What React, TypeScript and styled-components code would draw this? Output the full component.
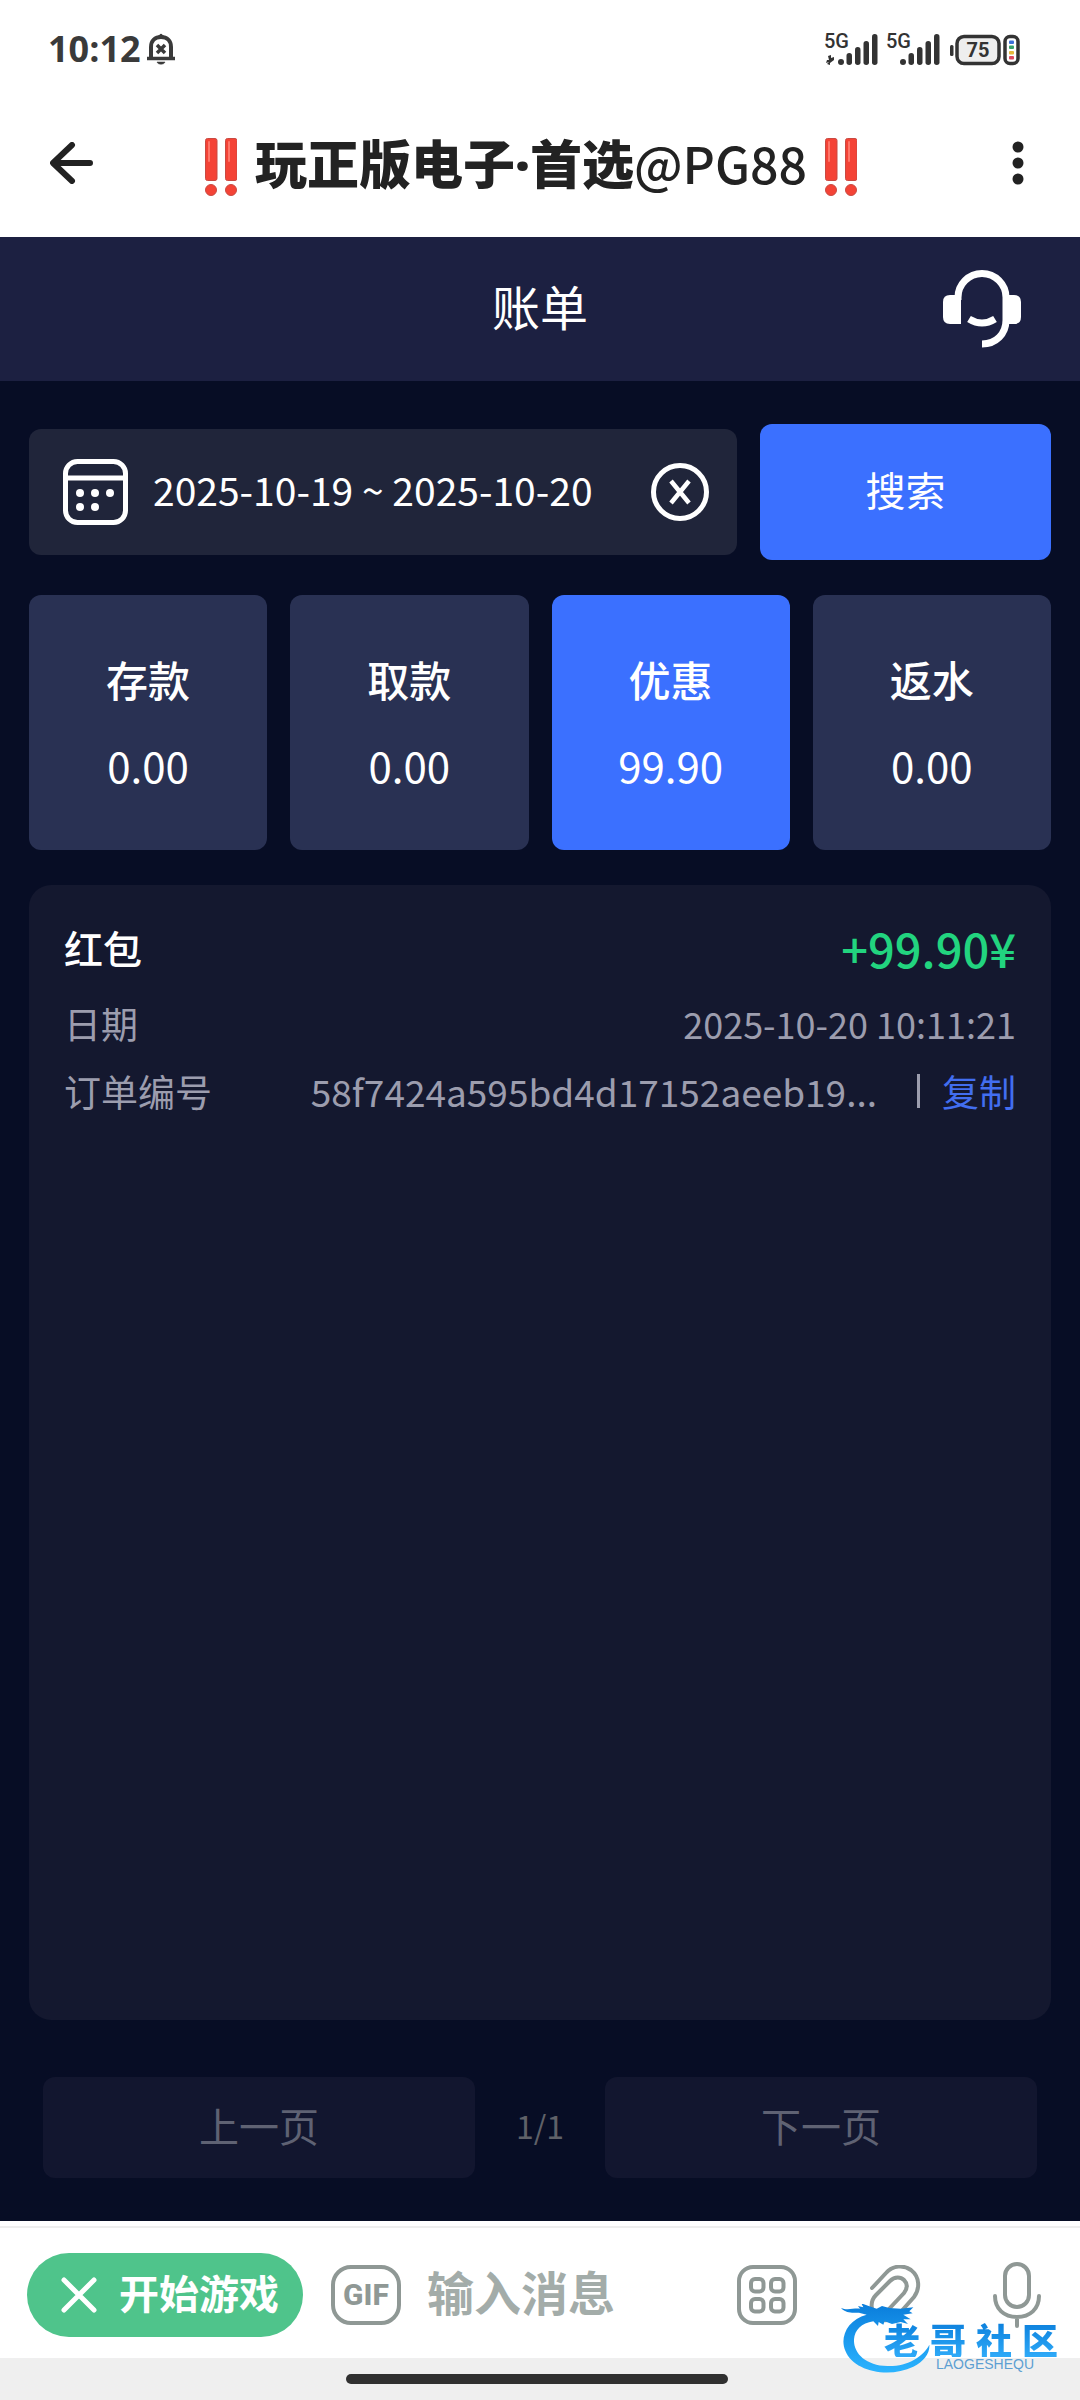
import React, { useState } from "react";
import styled, { createGlobalStyle } from "styled-components";

const GlobalStyle = createGlobalStyle`
  *, *::before, *::after { box-sizing: border-box; }
  body { margin: 0; background: #ffffff; }
  body, button, input {
    font-family: "Noto Sans CJK SC", "Noto Sans", sans-serif;
  }
  button { border: 0; padding: 0; background: none; color: inherit; cursor: pointer; }
  svg { display: block; flex: none; }
`;

const Page = styled.div`
  position: relative;
  display: flex;
  flex-direction: column;
  min-height: 100vh;
  background: #ffffff;
`;

const StatusBar = styled.div`
  display: flex;
  align-items: center;
  justify-content: space-between;
  height: 98px;
  padding: 0 59px 0 48px;
  color: #3a3a3a;
`;

const Clock = styled.div`
  display: flex;
  align-items: center;
  gap: 5px;
  font-family: "Open Sans", "Noto Sans", sans-serif;
  font-size: 36px;
  line-height: 44px;
  font-weight: 700;
`;

const TitleBar = styled.header`
  display: flex;
  align-items: center;
  height: 139px;
  padding: 0 56px 10px 50px;
  color: #222222;
`;

const MenuButton = styled.button`
  display: flex;
  justify-content: flex-end;
  width: 56px;
`;

const ChatTitle = styled.h1`
  flex: 1;
  display: flex;
  align-items: center;
  justify-content: center;
  gap: 18px;
  margin: 0;
  font-size: 52px;
  line-height: 64px;
  font-weight: 900;
  white-space: nowrap;
`;

const Emoji = styled.span`
  padding-top: 8px;
`;

const Dot = styled.span`
  font-family: "Noto Sans", sans-serif;
`;

const Handle = styled.span`
  font-size: 50px;
  font-weight: 500;
`;

const WebApp = styled.main`
  flex: 1;
  display: flex;
  flex-direction: column;
  background: #070d25;
  color: #ffffff;
`;

const AppHeader = styled.div`
  display: grid;
  grid-template-columns: 1fr auto 1fr;
  align-items: center;
  height: 144px;
  padding: 0 59px;
  background: #1c2041;
`;

const AppTitle = styled.h2`
  grid-column: 2;
  margin: 0;
  padding-bottom: 8px;
  font-size: 48px;
  line-height: 56px;
  font-weight: 400;
`;

const SupportButton = styled.button`
  justify-self: end;
`;

const Content = styled.div`
  flex: 1;
  display: flex;
  flex-direction: column;
  padding: 43px 29px;
`;

const SearchRow = styled.div`
  display: flex;
  align-items: center;
  gap: 23px;
`;

const DateField = styled.label`
  flex: 1;
  display: flex;
  align-items: center;
  height: 126px;
  padding: 0 28px 0 34px;
  border-radius: 12px;
  background: #20253a;
`;

const DateInput = styled.input`
  flex: 1;
  min-width: 0;
  margin: 0 0 0 24px;
  padding: 0 0 6px;
  border: 0;
  outline: 0;
  background: none;
  color: #ffffff;
  font-size: 39px;
  line-height: 56px;
`;

const SearchButton = styled.button`
  width: 291px;
  height: 136px;
  padding-bottom: 6px;
  border-radius: 12px;
  background: #3b70ff;
  color: #ffffff;
  font-size: 40px;
`;

const Tabs = styled.div`
  display: grid;
  grid-template-columns: repeat(4, 1fr);
  gap: 23px;
  margin-top: 35px;
`;

const Tab = styled.button<{ $active: boolean }>`
  display: flex;
  flex-direction: column;
  align-items: center;
  justify-content: center;
  gap: 30px;
  height: 255px;
  padding-bottom: 2px;
  border-radius: 12px;
  background: ${(p) => (p.$active ? "#3b70ff" : "#293153")};
  color: #ffffff;
  font-size: 42px;
  line-height: 56px;
`;

const TabLabel = styled.span`
  font-weight: 500;
`;

const Records = styled.section`
  flex: 1;
  margin-top: 35px;
  padding: 32px 35px;
  border-radius: 22px;
  background: #14182f;
`;

const Line = styled.div<{ $head?: boolean }>`
  display: flex;
  align-items: center;
  justify-content: space-between;
  height: ${(p) => (p.$head ? "72px" : "68px")};
  padding-bottom: ${(p) => (p.$head ? "12px" : "0")};
  color: ${(p) => (p.$head ? "#ffffff" : "#9c9dae")};
  font-size: ${(p) => (p.$head ? "39px" : "37px")};
  font-weight: ${(p) => (p.$head ? 500 : 400)};
`;

const Amount = styled.span`
  color: #22d47f;
  font-size: 47px;
`;

const DateValue = styled.span`
  font-size: 36px;
`;

const OrderValue = styled.span`
  display: flex;
  align-items: center;
  gap: 22px;
`;

const Divider = styled.span`
  width: 3px;
  height: 34px;
  margin-left: 18px;
  background: #9c9dae;
`;

const CopyButton = styled.button`
  color: #426ef0;
  font-size: 37px;
`;

const Pager = styled.nav`
  display: flex;
  align-items: center;
  margin-top: 57px;
  padding: 0 14px;
`;

const PageButton = styled.button`
  flex: 1;
  height: 101px;
  padding-bottom: 6px;
  border-radius: 12px;
  background: #12162f;
  color: #5f6273;
  font-size: 40px;
`;

const PageCount = styled.span`
  width: 130px;
  padding-bottom: 6px;
  color: #5f6168;
  font-size: 32px;
  text-align: center;
`;

const MessageBar = styled.footer`
  padding-top: 5px;
  background: #ffffff;
`;

const MessageRow = styled.div`
  display: flex;
  align-items: center;
  height: 132px;
  padding: 3px 39px 0 27px;
  border-top: 2px solid #eeeeee;
  color: #8f9895;
`;

const StartButton = styled.button`
  display: flex;
  align-items: center;
  gap: 22px;
  width: 276px;
  height: 84px;
  padding-left: 34px;
  border-radius: 42px;
  background: #4fc48b;
  color: #ffffff;
  font-size: 40px;
  line-height: 48px;
  font-weight: 700;
  white-space: nowrap;
`;

const StartLabel = styled.span`
  padding-bottom: 6px;
`;

const GifButton = styled.button`
  display: flex;
  align-items: center;
  justify-content: center;
  width: 70px;
  height: 60px;
  margin-left: 28px;
  border: 4px solid #8f9895;
  border-radius: 20px;
  color: #8f9895;
  font-family: Roboto, sans-serif;
  font-size: 30px;
  font-weight: 800;
`;

const MessageInput = styled.input`
  flex: 1;
  min-width: 0;
  margin: 0 0 0 26px;
  padding: 0 0 8px;
  border: 0;
  outline: 0;
  background: none;
  color: #222222;
  font-size: 47px;
  line-height: 64px;
  font-weight: 700;
  &::placeholder { color: #a3aca9; opacity: 1; }
`;

const Tools = styled.div`
  display: flex;
  align-items: center;
  gap: 71px;
`;

const GestureArea = styled.div`
  display: flex;
  justify-content: center;
  height: 42px;
  padding: 16px 6px 0 0;
  background: #efefef;
`;

const GestureBar = styled.div`
  width: 382px;
  height: 10px;
  border-radius: 5px;
  background: #303030;
`;

const Watermark = styled.div`
  position: absolute;
  right: 17px;
  bottom: 24px;
  width: 222px;
  height: 72px;
  pointer-events: none;
`;

const WatermarkText = styled.div`
  position: absolute;
  right: 0;
  bottom: 5px;
  display: flex;
  flex-direction: column;
  align-items: center;
`;

const WatermarkName = styled.span`
  display: grid;
  grid-template-columns: repeat(4, 46px);
  justify-items: center;
  background: linear-gradient(#0b7fdc, #2faaf8);
  background-clip: text;
  color: transparent;
  font-size: 36px;
  line-height: 36px;
  font-weight: 900;
`;

const WatermarkLatin = styled.span`
  padding-left: 28px;
  color: #5d9fd2;
  font-family: "Liberation Sans", Arial, sans-serif;
  font-size: 14px;
  line-height: 14px;
`;

function BellIcon() {
  return (
    <svg width="30" height="32" viewBox="0 0 30 32" fill="none" stroke="#3a3a3a">
      <path d="M5 25V14C5 8 9 4 15 4s10 4 10 10v11" strokeWidth="4" />
      <path d="M1 25.500h28" strokeWidth="3.500" />
      <path d="M12 3.500 15 1l3 2.500z" fill="#3a3a3a" strokeWidth="1" />
      <path d="m11 12 8 8m0-8-8 8" strokeWidth="3.500" />
      <path d="M11 29h8c-1 3-7 3-8 0z" fill="#3a3a3a" strokeWidth="0.500" />
    </svg>
  );
}

function StatusIcons() {
  const bars = [
    [5.5, 12],
    [14, 18],
    [22.5, 24],
    [31, 31],
  ];
  const font = { fontFamily: "Roboto, sans-serif" };
  return (
    <svg width="198" height="50" viewBox="0 -8 198 50" role="img" aria-label="5G 5G 75%">
      {[0, 62].map((x) => (
        <g key={x} fill="#333333" transform={`translate(${x} 0)`}>
          <text x="1" y="16" fontSize="20" fontWeight="500" style={font}>5G</text>
          <circle cx="18" cy="30" r="3" />
          {bars.map(([bx, h]) => (
            <rect key={bx} x={18 + bx} y={33 - h} width="5.500" height={h} rx="2.700" />
          ))}
        </g>
      ))}
      <path d="M5 24l3-1v3l3-1v3l-4 3v2l-3-1 2-2-3 1 1-3 2 0z" fill="#333333" />
      <rect x="127" y="13" width="3.500" height="11" rx="1.500" fill="#333333" />
      <rect x="134" y="4.500" width="42" height="27" rx="7" fill="#eeeeee" stroke="#333333" strokeWidth="3.500" />
      <text x="155" y="25" fontSize="20" fontWeight="700" textAnchor="middle" fill="#333333" style={font}>75</text>
      <rect x="182" y="4.500" width="13" height="27" rx="5" fill="#ffffff" stroke="#333333" strokeWidth="3.500" />
      <rect x="186" y="8.500" width="5" height="3.500" rx="1" fill="#3a6fd8" />
      <rect x="186" y="13.500" width="5" height="3.500" rx="1" fill="#35a06a" />
      <rect x="186" y="19" width="5" height="3.500" rx="1" fill="#e6b83a" />
      <rect x="186" y="24" width="5" height="3.500" rx="1" fill="#dd4a5e" />
    </svg>
  );
}

function BackIcon() {
  return (
    <svg width="44" height="42" viewBox="0 0 44 42" fill="none" stroke="currentColor" strokeWidth="6" strokeLinecap="round" strokeLinejoin="round">
      <path d="M40 21H4M22 3 3 21l19 18" />
    </svg>
  );
}

function MoreIcon() {
  return (
    <svg width="12" height="44" viewBox="0 0 12 44" fill="currentColor">
      <circle cx="6" cy="6" r="5.500" />
      <circle cx="6" cy="22" r="5.500" />
      <circle cx="6" cy="38" r="5.500" />
    </svg>
  );
}

function DoubleExclamation() {
  return (
    <Emoji>
      <svg width="32" height="58" viewBox="0 0 32 58" role="img" aria-label="‼️">
        {[0, 20].map((x) => (
          <g key={x} transform={`translate(${x} 0)`}>
            <rect x="0.500" y="0.500" width="11.500" height="42" rx="2" fill="#f44336" stroke="#c94a42" />
            <path d="M4 4v19" stroke="#ff7569" strokeWidth="2" strokeLinecap="round" />
            <circle cx="6" cy="52" r="5.500" fill="#f44336" stroke="#c94a42" />
          </g>
        ))}
      </svg>
    </Emoji>
  );
}

function HeadsetIcon() {
  return (
    <svg width="78" height="78" viewBox="0 0 78 78" fill="none" stroke="#ffffff" strokeWidth="7">
      <path d="M15 30V27.500a24 24 0 0 1 48 0V50c0 14-10 24-24 24" />
      <path d="M18 25H7q-7 0-7 7v15q0 7 7 7h11z" fill="#ffffff" stroke="none" />
      <path d="M60 25h11q7 0 7 7v15q0 7-7 7H60z" fill="#ffffff" stroke="none" />
      <path d="M26 49q13 8 26 0" />
    </svg>
  );
}

function CalendarIcon() {
  return (
    <svg width="66" height="66" viewBox="0 0 66 66" fill="#ffffff">
      <rect x="2.500" y="2.500" width="60" height="61" rx="12" fill="none" stroke="#ffffff" strokeWidth="5" />
      <path d="M3 16.500h59v5H3z" />
      <circle cx="17" cy="34" r="4" />
      <circle cx="32" cy="34" r="4" />
      <circle cx="47" cy="34" r="4" />
      <circle cx="17" cy="48" r="4" />
      <circle cx="32" cy="48" r="4" />
    </svg>
  );
}

function ClearIcon() {
  return (
    <svg width="58" height="58" viewBox="0 0 58 58" fill="none" stroke="#ffffff">
      <circle cx="29" cy="29" r="26.500" strokeWidth="5" />
      <path d="m20 18 18 22M38 18 20 40" strokeWidth="4.500" />
    </svg>
  );
}

function CrossIcon() {
  return (
    <svg width="36" height="36" viewBox="0 0 36 36" stroke="#ffffff" strokeWidth="5" strokeLinecap="round">
      <path d="m3 3 30 30M33 3 3 33" />
    </svg>
  );
}

function GridIcon() {
  return (
    <svg width="60" height="60" viewBox="0 0 60 60" fill="none" stroke="currentColor" strokeWidth="4">
      <rect x="2" y="2" width="56" height="56" rx="14" />
      {[14, 34].map((x) =>
        [14, 34].map((y) => <rect key={`${x}-${y}`} x={x} y={y} width="12.500" height="12.500" rx="4" />)
      )}
    </svg>
  );
}

function ClipIcon() {
  return (
    <svg width="54" height="60" viewBox="0 0 54 60" fill="none" stroke="currentColor" strokeWidth="4" strokeLinecap="round">
      <path d="M4 23 18 8C25 0 36 0 43 5c9 7 9 19 3 27L30 50c-6 6-15 7-21 2-7-6-7-16-1-22l14-14c5-5 11-4 14-1 4 4 3 9 0 13L20 45" />
    </svg>
  );
}

function MicIcon() {
  return (
    <svg width="48" height="66" viewBox="0 0 48 66" fill="none" stroke="currentColor" strokeWidth="4" strokeLinecap="round">
      <rect x="12" y="2" width="24" height="43" rx="12" />
      <path d="M2 34c0 13 9 21 22 21s22-8 22-21M24 55v9" />
    </svg>
  );
}

function DragonMark() {
  return (
    <svg width="90" height="72" viewBox="185 222 270 216">
      <defs>
        <linearGradient id="dragon" x1="0" y1="0" x2="0" y2="1">
          <stop offset="0" stopColor="#0a7ddb" />
          <stop offset="1" stopColor="#2bb4ff" />
        </linearGradient>
      </defs>
      <path
        fill="url(#dragon)"
        d="M262 254C205 268 180 322 198 362c24 62 130 84 204 48 32-16 50-40 48-66-18 36-66 66-126 64-64-2-102-38-100-80 2-28 22-48 58-54l14 14 2-12 14 8 4-10 22 8 26-6 22 6-14-14 22 0-22-14 28-4-10-6 12-12-38 4-34-2-22-6-16 8-24-8-22-8 6 12-16-4 6 8c-20-2-38 6-57-2 17 18 38 14 54 14z"
      />
    </svg>
  );
}

const categories = [
  { label: "存款", value: "0.00" },
  { label: "取款", value: "0.00" },
  { label: "优惠", value: "99.90" },
  { label: "返水", value: "0.00" },
];

export default function App() {
  const [active, setActive] = useState(2);
  const [range, setRange] = useState("2025-10-19 ~ 2025-10-20");

  return (
    <Page>
      <GlobalStyle />
      <StatusBar>
        <Clock>
          10:12
          <BellIcon />
        </Clock>
        <StatusIcons />
      </StatusBar>
      <TitleBar>
        <button aria-label="返回"><BackIcon /></button>
        <ChatTitle>
          <DoubleExclamation />
          <span>玩正版电子<Dot>·</Dot>首选<Handle>@PG88</Handle></span>
          <DoubleExclamation />
        </ChatTitle>
        <MenuButton aria-label="更多"><MoreIcon /></MenuButton>
      </TitleBar>

      <WebApp>
        <AppHeader>
          <AppTitle>账单</AppTitle>
          <SupportButton aria-label="客服"><HeadsetIcon /></SupportButton>
        </AppHeader>
        <Content>
          <SearchRow>
            <DateField>
              <CalendarIcon />
              <DateInput aria-label="日期范围" value={range} onChange={(e) => setRange(e.target.value)} />
              <button aria-label="清除" onClick={() => setRange("")}><ClearIcon /></button>
            </DateField>
            <SearchButton>搜索</SearchButton>
          </SearchRow>
          <Tabs>
            {categories.map((c, i) => (
              <Tab key={c.label} $active={i === active} aria-pressed={i === active} onClick={() => setActive(i)}>
                <TabLabel>{c.label}</TabLabel>
                <span>{c.value}</span>
              </Tab>
            ))}
          </Tabs>
          <Records>
            <Line $head>
              <span>红包</span>
              <Amount>+99.90¥</Amount>
            </Line>
            <Line>
              <span>日期</span>
              <DateValue>2025-10-20 10:11:21</DateValue>
            </Line>
            <Line>
              <span>订单编号</span>
              <OrderValue>
                <span>58f7424a595bd4d17152aeeb19...</span>
                <Divider />
                <CopyButton>复制</CopyButton>
              </OrderValue>
            </Line>
          </Records>
          <Pager>
            <PageButton>上一页</PageButton>
            <PageCount>1/1</PageCount>
            <PageButton>下一页</PageButton>
          </Pager>
        </Content>
      </WebApp>

      <MessageBar>
        <MessageRow>
          <StartButton><CrossIcon /><StartLabel>开始游戏</StartLabel></StartButton>
          <GifButton>GIF</GifButton>
          <MessageInput aria-label="输入消息" placeholder="输入消息" />
          <Tools>
            <button aria-label="命令"><GridIcon /></button>
            <button aria-label="附件"><ClipIcon /></button>
            <button aria-label="语音"><MicIcon /></button>
          </Tools>
        </MessageRow>
        <GestureArea><GestureBar /></GestureArea>
      </MessageBar>

      <Watermark>
        <DragonMark />
        <WatermarkText>
          <WatermarkName>
            <span>老</span><span>哥</span><span>社</span><span>区</span>
          </WatermarkName>
          <WatermarkLatin>LAOGESHEQU</WatermarkLatin>
        </WatermarkText>
      </Watermark>
    </Page>
  );
}
